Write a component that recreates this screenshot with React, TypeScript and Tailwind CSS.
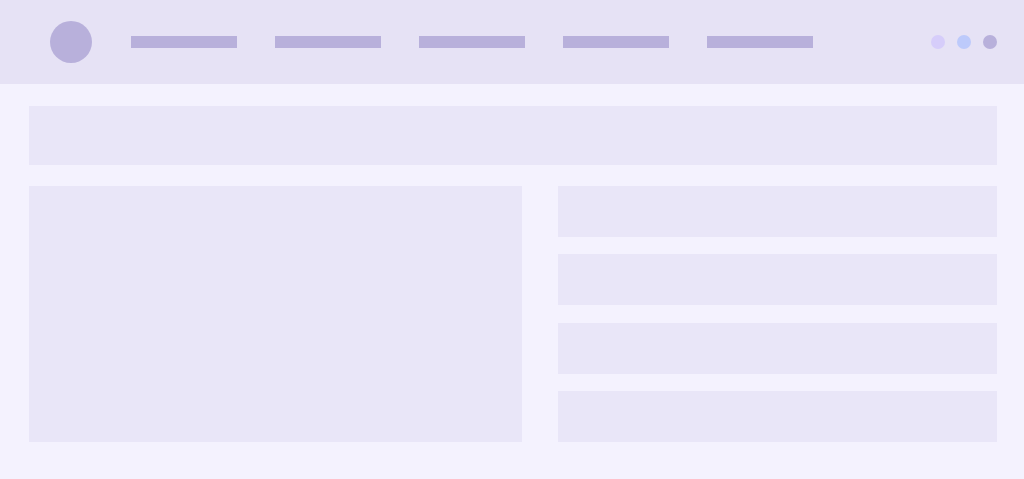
export default function App() {
  const navItems = [0, 1, 2, 3, 4];
  const cards = [0, 1, 2, 3];

  return (
    <div className="min-h-[479px] w-full bg-[#f4f2fe]">
      {/* Header */}
      <header className="flex h-[84px] items-center bg-[#e6e2f5] pl-[50px] pr-[27px]">
        <div className="h-[42px] w-[42px] rounded-full bg-[#b8b0db]" />
        <nav className="ml-[39px] flex gap-[38px]">
          {navItems.map((i) => (
            <div key={i} className="h-[12px] w-[106px] bg-[#b8b0db]" />
          ))}
        </nav>
        <div className="ml-auto flex gap-[12px]">
          <div className="h-[14px] w-[14px] rounded-full bg-[#d6cdfa]" />
          <div className="h-[14px] w-[14px] rounded-full bg-[#bdcafb]" />
          <div className="h-[14px] w-[14px] rounded-full bg-[#b8b0db]" />
        </div>
      </header>

      {/* Content */}
      <main className="pl-[29px] pr-[27px] pt-[22px]">
        <div className="h-[59px] bg-[#e9e6f8]" />
        <div className="mt-[21px] flex gap-[36px]">
          <div className="h-[256px] w-[493px] bg-[#e9e6f8]" />
          <div className="flex h-[256px] flex-1 flex-col justify-between">
            {cards.map((i) => (
              <div key={i} className="h-[51px] bg-[#e9e6f8]" />
            ))}
          </div>
        </div>
      </main>
    </div>
  );
}
